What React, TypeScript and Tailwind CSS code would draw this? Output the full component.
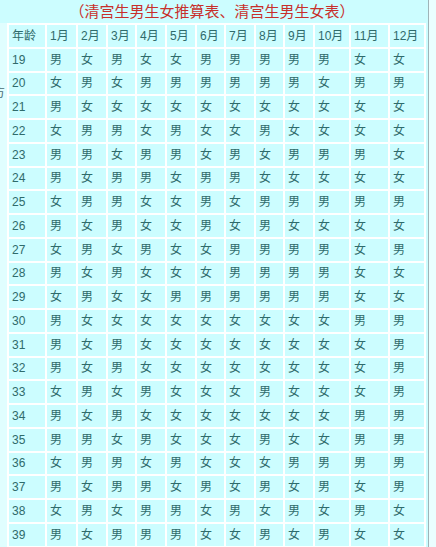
import React from 'react';

const months = ['1月', '2月', '3月', '4月', '5月', '6月', '7月', '8月', '9月', '10月', '11月', '12月'];

const chart: [number, string][] = [
  [19, '男女男女女男男男男男女女'],
  [20, '女男女男男男男男男女男男'],
  [21, '男女女女女女女女女女女女'],
  [22, '女男男女男女女男女女女女'],
  [23, '男男女男男女男女男男男女'],
  [24, '男女男男女男男女女女女女'],
  [25, '女男男女女男女男男男男男'],
  [26, '男女男女女男女男女女女女'],
  [27, '女男女男女女男男男男女男'],
  [28, '男女男女女女男男男男女女'],
  [29, '女男女女男男男男男男女女'],
  [30, '男女女女女女女女女女男男'],
  [31, '男女男女女女女女女女女男'],
  [32, '男女男女女女女女女女女男'],
  [33, '女男女男女女女男女女女男'],
  [34, '男女男女女女女女女女男男'],
  [35, '男男女男女女女男女女男男'],
  [36, '女男男女男女女女男男男男'],
  [37, '男女男男女男女男女男女男'],
  [38, '女男女男男女男女男女男女'],
  [39, '男女男男男女女男女男女女'],
];

function Cell({ children }: { children: React.ReactNode }) {
  return (
    <div className="bg-[#ccfdff] pl-[3px] flex items-center text-[12px] leading-none text-[#2f6b6b] whitespace-nowrap">
      {children}
    </div>
  );
}

export default function App() {
  return (
    <div
      className="w-[436px] h-[547px] overflow-hidden flex bg-[#eafeff]"
      style={{ fontFamily: '"Liberation Sans", "Noto Sans CJK SC", sans-serif' }}
    >
      <div className="w-[429px] shrink-0 flex flex-col bg-[#ccfdff] border-r border-[#9fb4b8]">
        <div className="h-[23px] shrink-0 flex items-center justify-center pr-[4px]">
          <span className="text-[15px] leading-none text-[#c8302c]">
            （清宫生男生女推算表、清宫生男生女表）
          </span>
        </div>
        <div className="flex flex-1 min-h-0">
          <div className="w-[7px] shrink-0 overflow-hidden bg-[#e0feff]">
            <div className="mt-[64px] -ml-[7px] text-[12px] leading-none text-[#4a6a72]">方</div>
          </div>
          <div className="grid grid-cols-[36px_29px_28px_27px_28px_28px_27px_28px_27px_28px_34px_37px_34px] auto-rows-[21.75px] gap-[2px] p-[2px] bg-white self-start">
            <Cell>年龄</Cell>
            {months.map((m) => (
              <Cell key={m}>{m}</Cell>
            ))}
            {chart.map(([age, row]) => (
              <React.Fragment key={age}>
                <Cell>{age}</Cell>
                {row.split('').map((g, i) => (
                  <Cell key={i}>{g}</Cell>
                ))}
              </React.Fragment>
            ))}
          </div>
        </div>
      </div>
    </div>
  );
}
